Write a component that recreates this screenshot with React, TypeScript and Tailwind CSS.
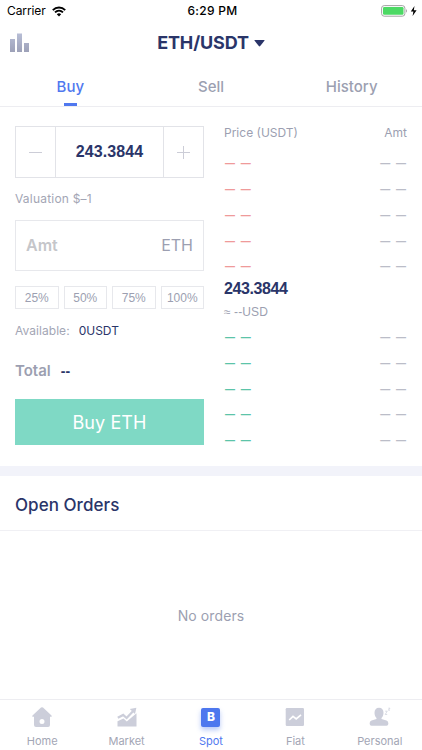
import React from 'react';

const orderRows = [1, 2, 3, 4, 5];

const HomeIcon = () => (
  <svg width="20" height="20" viewBox="0 0 20 20" fill="#ccceda">
    <path
      fillRule="evenodd"
      d="M9 .6Q10 -.2 11 .6L19.5 8.5Q20.2 9.8 19 9.8H18V18Q18 20 16 20H4Q2 20 2 18V9.8H1Q-.2 9.8.5 8.5ZM10 12a2.5 2.5 0 1 0 0 5 2.5 2.5 0 0 0 0-5Z"
    />
  </svg>
);

const MarketIcon = () => (
  <svg width="20" height="20" viewBox="0 0 20 20" fill="#ccceda">
    <path d="M.5 14.2L6.5 11.6L9.8 14.6L19.5 6.2V19.6H.5Z" />
    <path d="M.8 10.8L6.2 8L9.6 11L16 4.2" fill="none" stroke="#ccceda" strokeWidth="2.3" />
    <path d="M12.8 2L19.4.8L18 7Z" />
  </svg>
);

const SpotIcon = () => (
  <div className="flex h-[19px] w-[19px] items-center justify-center rounded-[2px] bg-[#4d77ee] text-[12px] font-extrabold text-white shadow-[0_3px_5px_rgba(77,119,238,0.4)]">
    B
  </div>
);

const FiatIcon = () => (
  <svg width="20" height="20" viewBox="0 0 20 20">
    <rect x=".7" y="1" width="18.3" height="18" rx="1.2" fill="#ccceda" />
    <path d="M4.2 13L8 9.4L11.2 12L16 7.8" fill="none" stroke="#fff" strokeWidth="1.7" />
  </svg>
);

const PersonalIcon = () => (
  <svg width="22" height="20" viewBox="0 0 22 20" fill="#ccceda">
    <path d="M10 .8C13 .8 14.5 2.9 14.5 5.8C14.5 8 13.8 9.8 12.5 11V12L17.5 13.5Q19.3 14.2 19.3 16V17Q19.3 18.8 17.5 18.8H2.5Q.7 18.8.7 17V16Q.7 14.2 2.5 13.5L7.5 12V11C6.2 9.8 5.5 8 5.5 5.8C5.5 2.9 7 .8 10 .8Z" />
    <path d="M16.2 4.2H18.2L16.2 7.5H18.2M19.3 1.2H21L19.3 3.2H21" fill="none" stroke="#ccceda" strokeWidth=".7" />
  </svg>
);

const navItems = [
  { label: 'Home', icon: <HomeIcon /> },
  { label: 'Market', icon: <MarketIcon /> },
  { label: 'Spot', icon: <SpotIcon />, active: true },
  { label: 'Fiat', icon: <FiatIcon /> },
  { label: 'Personal', icon: <PersonalIcon /> },
];

const StatusBar = () => (
  <div className="grid h-[22px] grid-cols-3 items-center text-[12px] leading-none text-black">
    <div className="flex items-center gap-[6px] pl-[7px]">
      <span className="tracking-[-0.1px]">Carrier</span>
      <svg width="14" height="11" viewBox="0 0 14 11" fill="none" stroke="#000" strokeWidth="1.9">
        <path d="M.8 4.1C4.3.6 9.7.6 13.2 4.1M3 6.4C5.3 4.2 8.7 4.2 11 6.4" />
        <path d="M4.8 8.3Q7 6.4 9.2 8.3L7 10.6Z" fill="#000" stroke="none" />
      </svg>
    </div>
    <div className="pl-[3px] text-center font-medium tracking-[0.3px]">6:29 PM</div>
    <div className="flex items-center justify-end pr-[4px]">
      <svg width="37" height="12" viewBox="0 0 37 12">
        <rect x=".6" y=".6" width="23.3" height="10.6" rx="2.6" fill="#fff" stroke="#a3a3a3" />
        <rect x="2" y="2" width="20.5" height="7.8" rx="1.2" fill="#4cd964" />
        <path d="M25 4Q27 5.9 25 7.8Z" fill="#a3a3a3" />
        <path d="M33.5 1L29.8 6.6H32.4L31.6 10.9L35.6 5.2H32.8Z" fill="#000" />
      </svg>
    </div>
  </div>
);

const Header = () => (
  <div className="grid h-[42px] grid-cols-[60px_1fr_60px] items-center">
    <svg className="ml-[10px]" width="20" height="20" viewBox="0 0 20 20">
      <defs>
        <linearGradient id="bars" x1="0" y1="0" x2="0" y2="1">
          <stop stopColor="#b8bed6" />
          <stop offset="1" stopColor="#9da1b8" />
        </linearGradient>
      </defs>
      <path d="M0 6H5V19H0ZM7 .5H12V19H7ZM14 10H19V19H14Z" fill="url(#bars)" />
    </svg>
    <div className="flex items-center justify-center gap-[5px] text-[#2a3569]">
      <span className="text-[18px] font-bold leading-none tracking-[-0.15px]">ETH/USDT</span>
      <svg width="11" height="7" viewBox="0 0 11 7" fill="currentColor">
        <path d="M1 0H10Q11 0 10.4.8L6.2 6.1Q5.5 6.8 4.8 6.1L.6.8Q0 0 1 0Z" />
      </svg>
    </div>
  </div>
);

const Tabs = () => (
  <div className="grid h-[43px] grid-cols-3 border-b border-[#ededf1] text-center text-[15px] font-medium text-[#9c9fb1]">
    <div className="flex flex-col items-center justify-between pt-[13px] text-[#5078ef]">
      <span className="leading-[20px]">Buy</span>
      <span className="h-[3px] w-[13px] bg-[#5078ef]" />
    </div>
    <div className="pt-[13px] leading-[20px]">Sell</div>
    <div className="pt-[13px] leading-[20px]">History</div>
  </div>
);

const TradeForm = () => (
  <div className="w-[189px] pt-[19px]">
    <div className="grid h-[52px] grid-cols-[40px_1fr_40px] border border-[#e2e3e8]">
      <button className="flex items-center justify-center border-r border-[#e2e3e8]">
        <span className="h-px w-[13px] bg-[#cccdd7]" />
      </button>
      <div className="flex items-center justify-center font-['Liberation_Sans',sans-serif] text-[16px] font-bold tracking-[0.1px] text-[#2a3569]">243.3844</div>
      <button className="flex items-center justify-center border-l border-[#e2e3e8]">
        <svg width="13" height="13" viewBox="0 0 13 13" stroke="#cccdd7">
          <path d="M0 6.5H13M6.5 0V13" />
        </svg>
      </button>
    </div>
    <div className="mt-[11px] h-[20px] text-[12px] leading-[20px] tracking-[0.2px] text-[#a3a6b5]">Valuation $–1</div>
    <div className="mt-[11px] flex h-[51px] items-center justify-between border border-[#e7e8ec] px-[10px] pb-px">
      <span className="text-[16px] font-semibold text-[#c5c6ca]">Amt</span>
      <span className="text-[16px] text-[#9c9fb1]">ETH</span>
    </div>
    <div className="mt-[15px] grid h-[23px] grid-cols-4 gap-[5px] font-['Liberation_Sans',sans-serif] text-[12px] text-[#9c9fb1]">
      {['25%', '50%', '75%', '100%'].map((pct) => (
        <button key={pct} className="flex items-center justify-center border border-[#e7e8ec]">{pct}</button>
      ))}
    </div>
    <div className="mt-[12px] flex h-[20px] items-center gap-[9px] text-[12px]">
      <span className="tracking-[0.05px] text-[#a3a6b5]">Available:</span>
      <span className="text-[#2a3569]">0USDT</span>
    </div>
    <div className="mt-[20px] flex h-[20px] items-center gap-[10px] text-[15px] font-semibold">
      <span className="text-[#9c9fb1]">Total</span>
      <span className="font-['Liberation_Sans',sans-serif] text-[14px] font-bold text-[#2a3569]">--</span>
    </div>
    <button className="mt-[18px] flex h-[46px] w-full items-center justify-center bg-[#7fd9c5] text-[18px] tracking-[0.1px] text-white">
      Buy ETH
    </button>
  </div>
);

const OrderRow: React.FC<{ color: string }> = ({ color }) => (
  <div className="flex h-[25.75px] items-center justify-between px-px pt-[2px] font-['Liberation_Sans',sans-serif] text-[10px] font-bold [word-spacing:3px]">
    <span className={color}>— —</span>
    <span className="text-[#bbbdc8]">— —</span>
  </div>
);

const OrderBook = () => (
  <div className="w-[183px] pt-[15px]">
    <div className="flex h-[22px] items-center justify-between text-[12px] text-[#9c9fb1]">
      <span>Price (USDT)</span>
      <span>Amt</span>
    </div>
    <div className="mt-[6px]">
      {orderRows.map((row) => (
        <OrderRow key={row} color="text-[#ef9a9a]" />
      ))}
    </div>
    <div className="h-[20px] font-['Liberation_Sans',sans-serif] text-[16px] font-bold leading-[20px] tracking-[-0.4px] text-[#2a3569]">243.3844</div>
    <div className="mt-[3px] h-[20px] font-['Liberation_Sans',sans-serif] text-[12px] leading-[20px] tracking-[0.1px] text-[#9c9fb1]">≈ --USD</div>
    <div className="mt-[2px]">
      {orderRows.map((row) => (
        <OrderRow key={row} color="text-[#5cc4a9]" />
      ))}
    </div>
  </div>
);

export default function App() {
  return (
    <div className="flex h-[750px] w-[422px] flex-col overflow-hidden bg-white font-['Inter','Liberation_Sans',sans-serif]">
      <StatusBar />
      <Header />
      <Tabs />
      <div className="flex h-[359px] justify-between pl-[15px] pr-[15px]">
        <TradeForm />
        <OrderBook />
      </div>
      <div className="h-[10px] bg-[#f2f3fa]" />
      <div className="flex h-[55px] items-center border-b border-[#f0f0f4] pl-[15px] pt-[5px] text-[17px] font-medium tracking-[0.05px] text-[#2a3569]">
        Open Orders
      </div>
      <div className="flex flex-1 items-center justify-center text-[14px] tracking-[0.1px] text-[#9c9fb1]">No orders</div>
      <nav className="grid h-[51px] grid-cols-5 border-t border-[#ededf1]">
        {navItems.map((item) => (
          <div key={item.label} className="flex flex-col items-center pt-[7px]">
            <div className="flex h-[20px] items-center">{item.icon}</div>
            <span className={`mt-[6px] text-[11px] leading-[16px] ${item.active ? 'text-[#5078ef]' : 'text-[#a3a6b5]'}`}>
              {item.label}
            </span>
          </div>
        ))}
      </nav>
    </div>
  );
}
